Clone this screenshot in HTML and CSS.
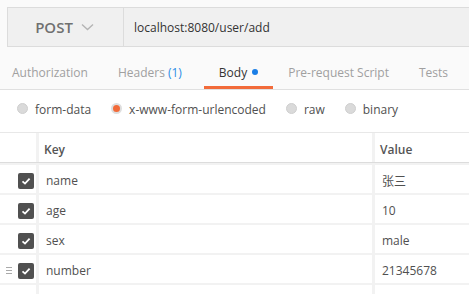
FILE: index.html
```html
<!DOCTYPE html>
<html lang="en">
<head>
  <meta charset="UTF-8" />
  <title>Request</title>
  <link rel="stylesheet" href="styles.css">
</head>
<body>

  <!-- Request bar -->
  <div class="request-bar">
    <div class="method">
      <span>POST</span>
      <svg class="chevron" width="13" height="8" viewBox="0 0 13 8"><path d="M1 1.5 L6.5 6.5 L12 1.5" fill="none" stroke="#b4b4b4" stroke-width="1.4"/></svg>
    </div>
    <div class="url">localhost:8080/user/add</div>
  </div>

  <!-- Tabs -->
  <div class="tabs">
    <div class="tab">Authorization</div>
    <div class="tab headers">Headers <span class="count">(1)</span></div>
    <div class="tab active">Body <span class="dot"></span></div>
    <div class="tab">Pre-request Script</div>
    <div class="tab">Tests</div>
  </div>

  <!-- Body types -->
  <div class="body-types">
    <label class="radio"><span class="circle"></span>form-data</label>
    <label class="radio"><span class="circle checked"></span>x-www-form-urlencoded</label>
    <label class="radio"><span class="circle"></span>raw</label>
    <label class="radio"><span class="circle"></span>binary</label>
  </div>

  <!-- Params table -->
  <div class="params">
    <div class="row head">
      <div class="cell check"></div>
      <div class="cell">Key</div>
      <div class="cell">Value</div>
    </div>
    <div class="row">
      <div class="cell check"><span class="box"></span></div>
      <div class="cell">name</div>
      <div class="cell">张三</div>
    </div>
    <div class="row">
      <div class="cell check"><span class="box"></span></div>
      <div class="cell">age</div>
      <div class="cell">10</div>
    </div>
    <div class="row">
      <div class="cell check"><span class="box"></span></div>
      <div class="cell">sex</div>
      <div class="cell">male</div>
    </div>
    <div class="row">
      <div class="cell check"><span class="handle"></span><span class="box"></span></div>
      <div class="cell">number</div>
      <div class="cell">21345678</div>
    </div>
    <div class="row">
      <div class="cell check"></div>
      <div class="cell"></div>
      <div class="cell"></div>
    </div>
  </div>

</body>
</html>
```

FILE: styles.css
```css
* {
  box-sizing: border-box;
}
body {
  margin: 0;
  background: #fafafa;
  font-family: 'Open Sans', 'Noto Sans CJK SC', sans-serif;
  font-size: 12px;
  color: #505050;
  overflow: hidden;
}

/* === Request bar === */
.request-bar {
  display: flex;
  height: 40px;
  margin: 7px 0 0 7px;
  background: #f0f0f0;
  border: 1px solid #dcdcdc;
  border-right: none;
}
.method {
  width: 116px;
  display: flex;
  align-items: center;
  justify-content: center;
  gap: 8px;
  padding-right: 2px;
  border-right: 1px solid #dcdcdc;
  font-size: 15px;
  font-weight: 600;
  color: #707070;
}
.url {
  flex: 1;
  display: flex;
  align-items: center;
  padding-left: 10px;
  color: #333;
}

/* === Tabs === */
.tabs {
  display: flex;
  height: 43px;
  padding-top: 9px;
  border-bottom: 1px solid #e0e0e0;
}
.tab {
  display: flex;
  align-items: center;
  gap: 5px;
  padding: 2px 15px 0;
  font-size: 12px;
  color: #a0a0a0;
  border-bottom: 3px solid transparent;
}
.tab:first-child { padding-left: 12px; }
.tab.headers { padding-right: 22px; }
.tab.active {
  color: #333;
  border-bottom-color: #f26b3a;
}
.count { color: #2b8de6; margin-left: -2px; }
.dot {
  width: 6px;
  height: 6px;
  border-radius: 50%;
  background: #1a7ee6;
}

/* === Body types === */
.body-types {
  display: flex;
  align-items: center;
  gap: 20px;
  height: 43px;
  padding: 0 0 4px 17px;
  background: #fff;
  border-bottom: 1px solid #e8e8e8;
}
.radio {
  display: flex;
  align-items: center;
  gap: 7px;
  color: #505050;
}
.circle {
  width: 11px;
  height: 11px;
  margin-top: -2px;
  border-radius: 50%;
  background: #dadada;
  border: 1px solid #cfcfcf;
}
.circle.checked {
  background: #f26b3a;
  border: 2px solid #dedede;
}

/* === Params table === */
.params {
  display: flex;
  flex-direction: column;
  gap: 2px;
  background: #f2f2f2;
}
.row {
  display: grid;
  grid-template-columns: 36px 333px 1fr;
  column-gap: 3px;
  height: 28px;
}
.row.head {
  height: 30px;
  border-bottom: 1px solid #dcdcdc;
  font-weight: 600;
  color: #555;
}
.cell {
  background: #fff;
  display: flex;
  align-items: center;
  padding: 3px 0 0 7px;
}
.row.head .cell { padding-left: 5px; }
.cell.check {
  justify-content: flex-end;
  gap: 6px;
  padding: 3px 2px 0 0;
}
.box {
  width: 16px;
  height: 16px;
  border-radius: 2px;
  background: #505050 url("data:image/svg+xml,%3Csvg xmlns='http://www.w3.org/2000/svg' width='16' height='16'%3E%3Cpath d='M4.5 8.3 L7 10.6 L11.6 5.6' fill='none' stroke='%23fff' stroke-width='1.8'/%3E%3C/svg%3E") no-repeat center;
}
.handle {
  width: 6px;
  height: 7px;
  border-top: 1px solid #aaa;
  border-bottom: 1px solid #aaa;
  position: relative;
}
.handle::after {
  content: "";
  position: absolute;
  left: 0;
  right: 0;
  top: 2px;
  border-top: 1px solid #aaa;
}
```
